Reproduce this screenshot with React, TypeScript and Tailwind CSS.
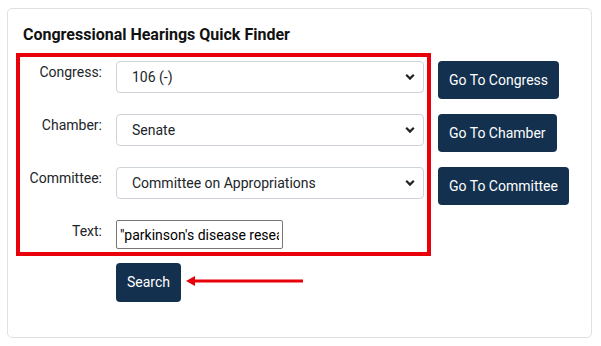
import React from 'react';

const labelCls = 'w-[82px] shrink-0 text-right pt-[1px] leading-[21px] text-[14px] text-[#212529]';

const Chevron: React.FC = () => (
  <svg
    className="pointer-events-none absolute right-[9px] top-1/2 -translate-y-1/2"
    width="10"
    height="7"
    viewBox="0 0 10 7"
  >
    <path d="M1.2 1.3 L5 5.1 L8.8 1.3" fill="none" stroke="#222" strokeWidth="2.2" />
  </svg>
);

const SelectRow: React.FC<{ label: string; value: string }> = ({ label, value }) => (
  <div className="flex items-start gap-[14px]">
    <label className={labelCls}>{label}</label>
    <div className="relative w-[308px]">
      <select
        className="w-full h-[32px] appearance-none rounded-[4px] border border-[#ced4da] bg-white pl-[15px] pr-[30px] text-[14px] text-[#212529] outline-none"
        defaultValue={value}
      >
        <option>{value}</option>
      </select>
      <Chevron />
    </div>
  </div>
);

const NavButton: React.FC<{ children: React.ReactNode }> = ({ children }) => (
  <button className="h-[38px] self-start rounded-[4px] bg-[#13304f] px-[11px] text-[14px] text-white">
    {children}
  </button>
);

const App: React.FC = () => {
  return (
    <div className="pl-[7px] pt-[8px] bg-white font-['Roboto',sans-serif]">
      <div className="w-[585px] h-[330px] rounded-[5px] border border-[#dfe1e3] px-[8px]">
        <h2 className="mt-[16px] pl-[7px] text-[16px] leading-[20px] font-bold text-[#111]">
          Congressional Hearings Quick Finder
        </h2>

        <div className="mt-[8px] flex">
          <div className="flex flex-col">
            <div className="w-[415px] border-4 border-[#e8000b] pt-[4px] pb-[3px] pr-[3px]">
              <div className="flex flex-col gap-[21px]">
                <SelectRow label="Congress:" value="106 (-)" />
                <SelectRow label="Chamber:" value="Senate" />
                <SelectRow label="Committee:" value="Committee on Appropriations" />
                <div className="flex items-start gap-[14px]">
                  <label className={labelCls}>Text:</label>
                  <input
                    type="text"
                    defaultValue={'"parkinson\'s disease research'}
                    className="w-[167px] h-[29px] rounded-[2px] border border-[#767676] px-[3px] text-[14px] text-black outline-none"
                  />
                </div>
              </div>
            </div>

            <div className="mt-[7px] ml-[100px] flex items-center gap-[5px]">
              <button className="h-[39px] w-[65px] rounded-[4px] bg-[#13304f] text-[14px] text-white">
                Search
              </button>
              <svg width="118" height="12" viewBox="0 0 118 12" className="-mt-[3px]">
                <path d="M0 6 L9 1 L9 11 Z" fill="#e8000b" />
                <rect x="7" y="4.5" width="110" height="3" fill="#e8000b" />
              </svg>
            </div>
          </div>

          <div className="ml-[7px] pt-[8px] flex flex-col gap-[15px]">
            <NavButton>Go To Congress</NavButton>
            <NavButton>Go To Chamber</NavButton>
            <NavButton>Go To Committee</NavButton>
          </div>
        </div>
      </div>
    </div>
  );
};

export default App;
